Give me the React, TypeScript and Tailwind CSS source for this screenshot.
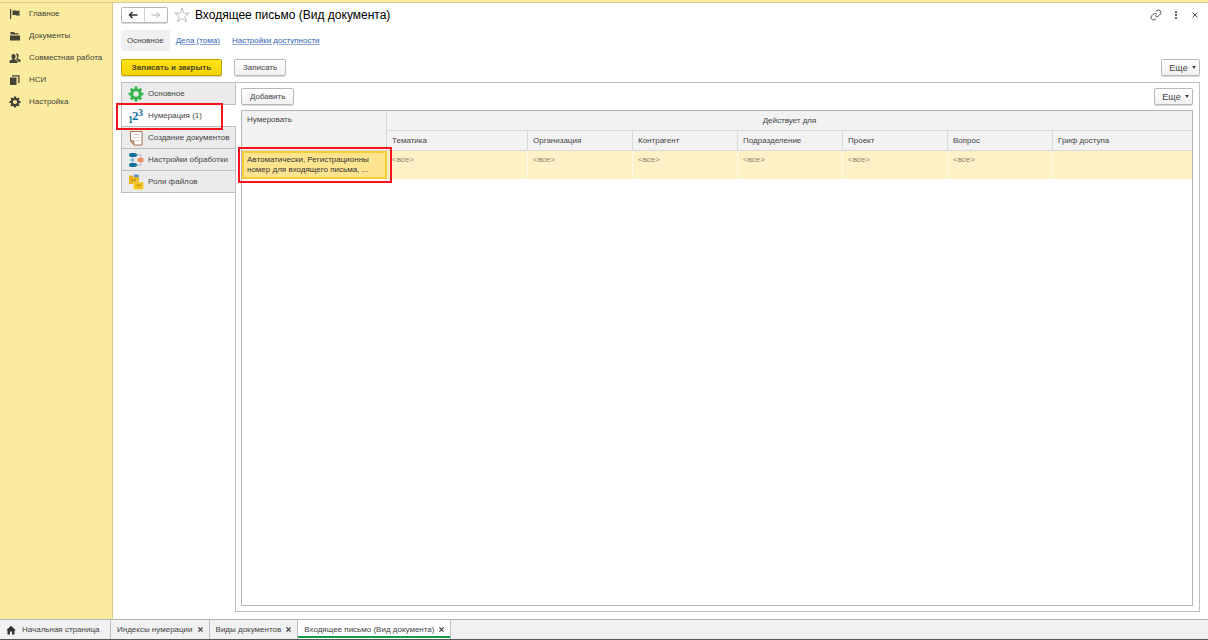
import React, { useState } from 'react';
import clsx from 'clsx';

const IconFlag = () => (
  <svg viewBox="0 0 12 12" className="size-3" fill="#454238"><path d="M1 1h1.200v10H1zM3.500 2.500h3.200l.6.3H11l-.8 2.300.8 2.300H7.200l-.6-.4H3.500z" /></svg>
);

const IconFolder = () => (
  <svg viewBox="0 0 12 12" className="size-3" fill="#454238"><path d="M1.500 2h3.500l1 1.200h3.500v1.300h-8zM1 5.500h10v5H1z" /></svg>
);

const IconPeople = () => (
  <svg viewBox="0 0 12 12" className="size-3" fill="#454238">
    <path d="M7.600 1.500c1.300 0 2 .9 2 2.200 0 .9-.4 1.600-.9 2v.8L11.500 7.800V10H9.300V8.800L7 7.300c.6-.6 1-1.600 1-2.700 0-1.100-.4-2-1.200-2.600.2-.3.500-.5.800-.5z" />
    <path d="M4.500 2c1.300 0 2.100 1 2.100 2.400 0 1-.4 1.800-1 2.200v.7l2.900 1.500V11H.5V8.800l2.900-1.500v-.7c-.6-.4-1-1.200-1-2.200C2.400 3 3.200 2 4.500 2z" />
  </svg>
);

const IconStack = () => (
  <svg viewBox="0 0 12 12" className="size-3" fill="#454238"><path d="M1 3.500h6.500V11H1zM3 1.200h7.500V9H9.200V2.400H3z" /></svg>
);

const GearIcon = ({ color, className }: { color: string; className: string }) => (
  <svg viewBox="0 0 16 16" className={className}>
    <g fill={color}>
      {[0, 45, 90, 135, 180, 225, 270, 315].map(a => (
        <path key={a} d="M6.200 4.500L6.700.6h2.600l.5 3.900z" transform={`rotate(${a} 8 8)`} />
      ))}
    </g>
    <circle cx="8" cy="8" r="4.200" fill="none" stroke={color} strokeWidth="2.800" />
  </svg>
);

const IconNumbers = () => (
  <svg viewBox="0 0 16 16" className="size-4 overflow-visible" fill="#15749a" fontFamily="Liberation Serif, serif" fontWeight="bold">
    <text x="0" y="15" fontSize="10">1</text>
    <text x="4" y="12" fontSize="13">2</text>
    <text x="10" y="8" fontSize="10">3</text>
  </svg>
);

const IconDoc = () => (
  <svg viewBox="0 0 16 16" className="size-4">
    <path d="M2.500 1.500h11.500v13.500H6l-3.500-4z" fill="#fff" stroke="#a8714c" />
    <path d="M2.500 10.500H6V15z" fill="#d9b79c" stroke="#a8714c" strokeWidth=".8" />
    <path d="M5 4.500h6.500M5 7.500h6.500M8 10.500h3.500" stroke="#e3cdbc" />
  </svg>
);

const IconFlow = () => (
  <svg viewBox="0 0 16 16" className="size-4">
    <path d="M4.500 3H13v3M4.500 3v10M4.500 13H13v-3" fill="none" stroke="#9db7c6" />
    <rect x="1" y="1" width="8" height="4" rx="2" fill="#176f9c" />
    <path d="M4.500 6l2.800 2-2.800 2-2.800-2z" fill="#7db9d8" />
    <rect x="9.500" y="6" width="6" height="4" rx="1" fill="#ee8a52" />
    <rect x="1" y="11" width="8" height="4" rx="2" fill="#176f9c" />
  </svg>
);

const IconFiles = () => (
  <svg viewBox="0 0 16 16" className="size-4">
    <path d="M6 .5h4.500L11 4H6z" fill="#4a9bd6" />
    <path d="M1 1.500h3.500l1 1.500H11v7H1z" fill="#e6b416" />
    <path d="M5.500 6.500H9l1 1.500h5.500v7.500h-10z" fill="#f2c21c" stroke="#fff3c0" strokeWidth=".4" />
    <path d="M3.500 5.500c1 1.500 3.500 1.500 4.500 0M8.500 10.500c1 1.500 3.500 1.500 4.500 0" fill="none" stroke="#a87a08" />
  </svg>
);

const sections = [
  { title: 'Главное', icon: <IconFlag /> },
  { title: 'Документы', icon: <IconFolder /> },
  { title: 'Совместная работа', icon: <IconPeople /> },
  { title: 'НСИ', icon: <IconStack /> },
  { title: 'Настройка', icon: <GearIcon color="#454238" className="size-3" /> },
];

const tabs = [
  { title: 'Основное', icon: <GearIcon color="#35b44a" className="size-4" /> },
  { title: 'Нумерация (1)', icon: <IconNumbers /> },
  { title: 'Создание документов', icon: <IconDoc /> },
  { title: 'Настройки обработки', icon: <IconFlow /> },
  { title: 'Роли файлов', icon: <IconFiles /> },
];

const columns = [
  { title: 'Тематика', value: '<все>' },
  { title: 'Организация', value: '<все>' },
  { title: 'Контрагент', value: '<все>' },
  { title: 'Подразделение', value: '<все>' },
  { title: 'Проект', value: '<все>' },
  { title: 'Вопрос', value: '<все>' },
  { title: 'Гриф доступа', value: '' },
];

const windows = ['Индексы нумерации', 'Виды документов', 'Входящее письмо (Вид документа)'];

const buttonClass = 'h-[17px] rounded-[2px] border border-[#b8b8b8] bg-linear-to-b from-white to-[#f1f1f1] text-[#444] shadow-[0_1px_0_#d9d9d9]';

const MoreButton = () => (
  <button className={clsx(buttonClass, 'flex w-[39px] items-center justify-center gap-1 pl-1 text-[9px]')}>
    Еще
    <svg viewBox="0 0 4 3" className="h-[3px] w-1" fill="#444"><path d="M0 0h4L2 3z" /></svg>
  </button>
);

const App: React.FC = () => {
  const [activeTab, setActiveTab] = useState(1);
  const [activeWindow, setActiveWindow] = useState(2);

  return (
    <div className="flex min-h-screen flex-col border-t-2 border-[#fbeb9e] bg-white font-['Liberation_Sans',Arial,sans-serif] text-[8px] leading-[10px] text-[#444]">
      <div className="flex flex-1 border-t border-[#dccb85]">
        <nav className="w-[113px] shrink-0 border-r border-[#d8c883] bg-[#fbeb9e]">
          {sections.map(s => (
            <a key={s.title} href="#" className="flex h-[22px] items-center gap-2 pl-[9px] whitespace-nowrap text-[#454238]">
              {s.icon}
              {s.title}
            </a>
          ))}
        </nav>

        <main className="flex min-w-0 flex-1 flex-col pt-1 pr-2 pb-[7px] pl-2">
          <header className="flex h-4 items-center">
            <div className="flex h-4 w-[47px] rounded-[2px] border border-[#b8b8b8] shadow-[0_1px_0_#d9d9d9]">
              <button aria-label="Назад" className="flex flex-1 items-center justify-center border-r border-[#d0d0d0]">
                <svg viewBox="0 0 10 8" className="h-2 w-[10px]" fill="none" stroke="#333" strokeWidth="1.500"><path d="M9.500 4H1.500M4.500 1L1.500 4l3 3" /></svg>
              </button>
              <button aria-label="Вперед" className="flex flex-1 items-center justify-center">
                <svg viewBox="0 0 10 8" className="h-2 w-[10px]" fill="none" stroke="#aaa"><path d="M.5 4h8M5.500 1l3 3-3 3" /></svg>
              </button>
            </div>
            <button aria-label="В избранное" className="ml-1.5">
              <svg viewBox="0 0 16 16" className="size-4" fill="#fff" stroke="#aaa" strokeWidth=".8"><path d="M8 1l1.700 5.100h5.500l-4.400 3.300 1.700 5.300L8 11.500l-4.500 3.200 1.700-5.300L.8 6.100h5.500z" /></svg>
            </button>
            <h1 className="ml-[5px] text-[12px] leading-4 text-black">Входящее письмо (Вид документа)</h1>
            <div className="ml-auto flex items-center gap-3">
              <button aria-label="Получить ссылку">
                <svg viewBox="0 0 24 24" className="size-3" fill="none" stroke="#555" strokeWidth="2"><path d="M10 13a5 5 0 0 0 7.540.54l3-3a5 5 0 0 0-7.070-7.070l-1.720 1.710M14 11a5 5 0 0 0-7.540-.54l-3 3a5 5 0 0 0 7.070 7.070l1.710-1.710" /></svg>
              </button>
              <button aria-label="Меню">
                <svg viewBox="0 0 4 8" className="h-2 w-1" fill="#666"><path d="M1 0h2v2H1zM1 3h2v2H1zM1 6h2v2H1z" /></svg>
              </button>
              <button aria-label="Закрыть" className="mx-0.5">
                <svg viewBox="0 0 6 6" className="size-1.5" stroke="#555"><path d="M.5.5l5 5M5.500.5l-5 5" /></svg>
              </button>
            </div>
          </header>

          <div className="mt-[7px] flex h-[21px] items-center gap-3">
            <span className="-mr-1.5 rounded-[2px] bg-[#f0f0f0] px-1.5 py-[5px] leading-[11px]">Основное</span>
            <a href="#" className="text-[#2f5fb5] underline decoration-[#8ba6d6] underline-offset-1">Дела (тома)</a>
            <a href="#" className="text-[#2f5fb5] underline decoration-[#8ba6d6] underline-offset-1">Настройки доступности</a>
          </div>

          <div className="mt-2 flex gap-3">
            <button className="h-[17px] w-[101px] rounded-[2px] border border-[#c2a200] bg-linear-to-b from-[#ffe417] to-[#f3d200] font-bold text-[#4d4620] shadow-[0_1px_0_#d9d9d9]">
              Записать и закрыть
            </button>
            <button className={clsx(buttonClass, 'px-2')}>Записать</button>
            <div className="ml-auto"><MoreButton /></div>
          </div>

          <div className="mt-1.5 flex flex-1">
            <div role="tablist" className="flex w-[115px] shrink-0 flex-col">
              {tabs.map((t, i) => (
                <button
                  key={t.title}
                  role="tab"
                  aria-selected={i === activeTab}
                  onClick={() => setActiveTab(i)}
                  className={clsx(
                    'flex h-[22px] items-center gap-1 border-t border-l border-[#bfbfbf] pl-1.5 whitespace-nowrap',
                    i === activeTab ? 'bg-white' : 'border-r bg-[#ebebeb]',
                    i === 1 && 'relative z-10'
                  )}
                >
                  {t.icon}
                  {t.title}
                  {i === 1 && <span className="absolute -top-0.5 -left-1.5 h-[27px] w-[107px] border-2 border-[#f5141c]" />}
                </button>
              ))}
              <div className="flex-1 border-r border-[#bfbfbf]">
                <div className="border-t border-[#bfbfbf]" />
              </div>
            </div>

            <section className="flex min-w-0 flex-1 flex-col border-t border-r border-b border-[#bfbfbf] p-[5px] pr-1.5">
              <div className="flex justify-between">
                <button className={clsx(buttonClass, 'px-2')}>Добавить</button>
                <MoreButton />
              </div>

              <div className="mt-[5px] flex-1 border border-[#b5b5b5]">
                <table className="w-full table-fixed border-separate border-spacing-0 text-left">
                  <colgroup>
                    <col className="w-[145px]" />
                    <col className="w-[141px]" />
                    <col className="w-[105px]" />
                    <col className="w-[105px]" />
                    <col className="w-[105px]" />
                    <col className="w-[105px]" />
                    <col className="w-[105px]" />
                    <col />
                  </colgroup>
                  <thead className="bg-[#f2f2f2]">
                    <tr className="h-5">
                      <th rowSpan={2} className="border-r border-b border-[#d9d9d9] px-[5px] py-1 align-top font-normal">Нумеровать</th>
                      <th colSpan={7} className="border-b border-[#d9d9d9] p-0 text-center font-normal">Действует для</th>
                    </tr>
                    <tr className="h-5">
                      {columns.map(c => (
                        <th key={c.title} className="border-r border-b border-[#d9d9d9] px-[5px] py-0 font-normal last:border-r-0">{c.title}</th>
                      ))}
                    </tr>
                  </thead>
                  <tbody>
                    <tr className="h-7 bg-[#fef1c6]">
                      <td className="relative p-0 align-top">
                        <div className="h-7 border-2 border-[#f7cd35] bg-[#ffe48f] px-[3px] py-0.5 whitespace-nowrap text-[#333]">
                          Автоматически, Регистрационны<br />номер для входящего письма, ...
                        </div>
                        <span className="absolute -top-1 -left-1 z-10 h-9 w-[154px] border-2 border-[#f5141c]" />
                      </td>
                      {columns.map(c => (
                        <td key={c.title} className="border-r border-[#fff9e6] px-[5px] py-1 align-top text-[#8c8672] last:border-r-0">{c.value}</td>
                      ))}
                    </tr>
                  </tbody>
                </table>
              </div>
            </section>
          </div>
        </main>
      </div>

      <footer className="flex h-[21px] border-t border-b border-t-[#b5b5b5] border-b-[#555] bg-[#f1f1f1]">
        <button className="flex w-[111px] items-center gap-1.5 border-r border-[#bfbfbf] pl-1.5 whitespace-nowrap">
          <svg viewBox="0 0 10 10" className="size-[10px]" fill="#333"><path d="M5 .8l4.800 4.400H8.500V9.500H6V6.500H4v3H1.500V5.200H.2z" /></svg>
          Начальная страница
        </button>
        {windows.map((w, i) => (
          <div key={w} className={clsx('flex items-center gap-[5px] border-r border-[#bfbfbf] px-1.5', i === activeWindow && 'bg-white shadow-[inset_0_-1px_0_#fff,inset_0_-3px_0_#159a4c]')}>
            <button onClick={() => setActiveWindow(i)} className="whitespace-nowrap">{w}</button>
            <button aria-label="Закрыть окно">
              <svg viewBox="0 0 6 6" className="size-[5px]" stroke="#333" strokeWidth="1.300"><path d="M.5.5l5 5M5.500.5l-5 5" /></svg>
            </button>
          </div>
        ))}
      </footer>
    </div>
  );
};

export default App;
